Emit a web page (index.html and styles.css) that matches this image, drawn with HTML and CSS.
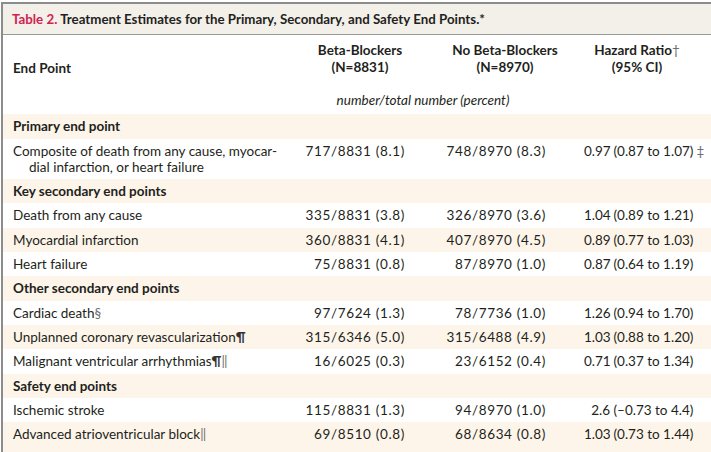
FILE: index.html
```html
<!DOCTYPE html>
<html>
<head>
<meta charset="utf-8">
<link rel="stylesheet" href="styles.css">
</head>
<body>
<div class="frame">
  <div class="title"><span class="tnum">Table 2.</span> Treatment Estimates for the Primary, Secondary, and Safety End Points.*</div>
  <table class="tbl">
    <colgroup>
      <col class="c1"><col class="c2"><col class="c3"><col class="c4">
    </colgroup>
    <thead>
      <tr class="hrow">
        <th class="h-left">End Point</th>
        <th class="h-mid">Beta-Blockers<br>(N=8831)</th>
        <th class="h-mid">No Beta-Blockers<br>(N=8970)</th>
        <th class="h-hr">Hazard Ratio<span class="fn">†</span><br>(95% CI)</th>
      </tr>
      <tr class="urow">
        <th></th>
        <th colspan="2" class="units">number/total number (percent)</th>
        <th></th>
      </tr>
    </thead>
    <tbody>
      <tr class="sec"><td colspan="4">Primary end point</td></tr>
      <tr class="w"><td class="ep hang">Composite of death from any cause, myocar-<br>dial infarction, or heart failure</td><td class="n1">717/8831 (8.1)</td><td class="n2">748/8970 (8.3)</td><td class="hr"><span class="pe">0.97</span> (0.87 to 1.07)<span class="fn dag">‡</span></td></tr>
      <tr class="sec"><td colspan="4">Key secondary end points</td></tr>
      <tr class="w"><td class="ep">Death from any cause</td><td class="n1">335/8831 (3.8)</td><td class="n2">326/8970 (3.6)</td><td class="hr"><span class="pe">1.04</span> (0.89 to 1.21)</td></tr>
      <tr class="b"><td class="ep">Myocardial infarction</td><td class="n1">360/8831 (4.1)</td><td class="n2">407/8970 (4.5)</td><td class="hr"><span class="pe">0.89</span> (0.77 to 1.03)</td></tr>
      <tr class="w"><td class="ep">Heart failure</td><td class="n1">75/8831 (0.8)</td><td class="n2">87/8970 (1.0)</td><td class="hr"><span class="pe">0.87</span> (0.64 to 1.19)</td></tr>
      <tr class="sec"><td colspan="4">Other secondary end points</td></tr>
      <tr class="w"><td class="ep">Cardiac death<span class="fn">§</span></td><td class="n1">97/7624 (1.3)</td><td class="n2">78/7736 (1.0)</td><td class="hr"><span class="pe">1.26</span> (0.94 to 1.70)</td></tr>
      <tr class="b"><td class="ep">Unplanned coronary revascularization<span class="fn dark">¶</span></td><td class="n1">315/6346 (5.0)</td><td class="n2">315/6488 (4.9)</td><td class="hr"><span class="pe">1.03</span> (0.88 to 1.20)</td></tr>
      <tr class="w"><td class="ep">Malignant ventricular arrhythmias<span class="fn dark">¶</span><span class="fn">‖</span></td><td class="n1">16/6025 (0.3)</td><td class="n2">23/6152 (0.4)</td><td class="hr"><span class="pe">0.71</span> (0.37 to 1.34)</td></tr>
      <tr class="sec"><td colspan="4">Safety end points</td></tr>
      <tr class="w"><td class="ep">Ischemic stroke</td><td class="n1">115/8831 (1.3)</td><td class="n2">94/8970 (1.0)</td><td class="hr"><span class="pe">2.6</span> (–0.73 to 4.4)</td></tr>
      <tr class="b last"><td class="ep">Advanced atrioventricular block<span class="fn">‖</span></td><td class="n1">69/8510 (0.8)</td><td class="n2">68/8634 (0.8)</td><td class="hr"><span class="pe">1.03</span> (0.73 to 1.44)</td></tr>
    </tbody>
  </table>
</div>
</body>
</html>
```

FILE: styles.css
```css
html, body {
  margin: 0;
  padding: 0;
  background: #ffffff;
}
body {
  padding: 2px 0 0 1px;
  font-family: Lato, "Noto Sans", "Liberation Sans", sans-serif;
  color: #231f20;
  overflow: hidden;
}
.frame {
  border-top: 2px solid #8c8c8c;
  border-left: 2px solid #8c8c8c;
}
.title {
  background: #f3f0ea;
  border-bottom: 1px solid #9a9a9a;
  height: 30px;
  line-height: 30px;
  padding-left: 9px;
  font-size: 13.3px;
  font-weight: bold;
  color: #231f20;
  white-space: nowrap;
}
.tnum {
  color: #d2204f;
}
.fn {
  font-weight: normal;
  color: #6d6d6d;
}
.fn.dark {
  color: #333333;
  font-weight: bold;
}
.fn.dag {
  margin-left: 3px;
}
.tbl {
  border-collapse: collapse;
  table-layout: fixed;
  width: 708px;
  font-size: 13.5px;
}
.c1 { width: 285px; }
.c2 { width: 144px; }
.c3 { width: 146px; }
.c4 { width: 133px; }
.tbl th {
  padding: 6.5px 0 7.5px 0;
  line-height: 17px;
  vertical-align: top;
  font-weight: bold;
}
.tbl .h-left {
  text-align: left;
  padding-left: 10px;
  padding-top: 24.5px;
}
.tbl .h-mid { text-align: center; }
.tbl .h-hr { text-align: center; padding-right: 15px; }
.tbl .urow th {
  padding: 6px 0 4.3px 0;
  line-height: 20px;
  font-weight: normal;
}
.tbl .urow .units {
  font-style: italic;
  text-align: center;
  padding-right: 20px;
}
.tbl td {
  line-height: 16.3px;
  padding: 4px 0;
  vertical-align: top;
}
.tbl tr.sec td {
  background: #fdf5ea;
  font-weight: bold;
  padding-left: 10px;
}
.tbl tr.b td {
  background: #fdf5ea;
}
.tbl tr.w td {
  background: #ffffff;
}
.tbl td.ep {
  padding-left: 10px;
}
.tbl td.hang {
  padding-left: 26px;
  text-indent: -16px;
}
.tbl td.n1 {
  text-align: right;
  padding-right: 27px;
  letter-spacing: 0.65px;
}
.tbl td.n2 {
  text-align: right;
  padding-right: 32px;
  letter-spacing: 0.65px;
}
.tbl td.hr {
  padding-left: 6px;
  white-space: nowrap;
}
.pe {
  display: inline-block;
  width: 26px;
  text-align: right;
}
.tbl tr.last td {
  padding-bottom: 24px;
}
```
